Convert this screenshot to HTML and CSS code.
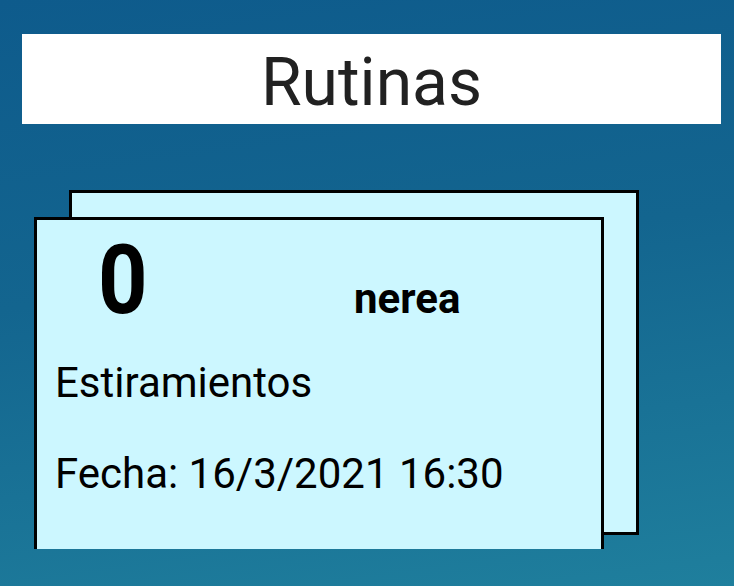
FILE: index.html
```html
<!DOCTYPE html>
<html lang="es">
<head>
<meta charset="utf-8">
<title>Rutinas</title>
<link rel="stylesheet" href="styles.css">
</head>
<body>
<div class="page">
  <header class="title-bar">Rutinas</header>
  <div class="list">
    <div class="stack">
      <div class="card card-back"></div>
      <div class="card card-front">
        <div class="card-top">
          <span class="count">0</span>
          <span class="user">nerea</span>
        </div>
        <div class="name">Estiramientos</div>
        <div class="date">Fecha: 16/3/2021 16:30</div>
      </div>
    </div>
  </div>
</div>
</body>
</html>
```

FILE: styles.css
```css
html, body {
  margin: 0;
  padding: 0;
  width: 734px;
  height: 586px;
  overflow: hidden;
}

body {
  background: linear-gradient(172deg, #0e5b8c 0%, #13658f 45%, #1f7f9d 100%);
  font-family: Roboto, "Noto Sans", sans-serif;
}

.page {
  padding-top: 34px;
}

.title-bar {
  margin-left: 22px;
  width: 699px;
  height: 90px;
  box-sizing: border-box;
  padding-top: 7px;
  background: #ffffff;
  color: #212121;
  font-size: 66px;
  line-height: 83px;
  text-align: center;
}

.list {
  margin-top: 66px;
  margin-left: 34px;
  height: 359px;
  overflow: hidden;
}

.stack {
  display: grid;
  width: 605px;
}

.card {
  grid-area: 1 / 1;
  box-sizing: border-box;
  width: 570px;
  background: #ccf7ff;
  border: 3px solid #000;
}

.card-back {
  margin-left: 35px;
  height: 345px;
}

.card-front {
  margin-top: 27px;
  height: 400px;
  padding: 12px 18px 0;
  color: #000;
}

.card-top {
  display: flex;
  align-items: baseline;
}

.count {
  display: inline-block;
  margin-left: 43px;
  font-size: 96px;
  font-weight: 700;
  line-height: 96px;
  transform: scaleX(0.9);
  transform-origin: left center;
}

.user {
  margin-left: 201px;
  font-size: 42px;
  font-weight: 700;
  line-height: 42px;
}

.name {
  margin-top: 30px;
  font-size: 42px;
  line-height: 50px;
}

.date {
  margin-top: 41px;
  font-size: 42px;
  line-height: 50px;
}
```
